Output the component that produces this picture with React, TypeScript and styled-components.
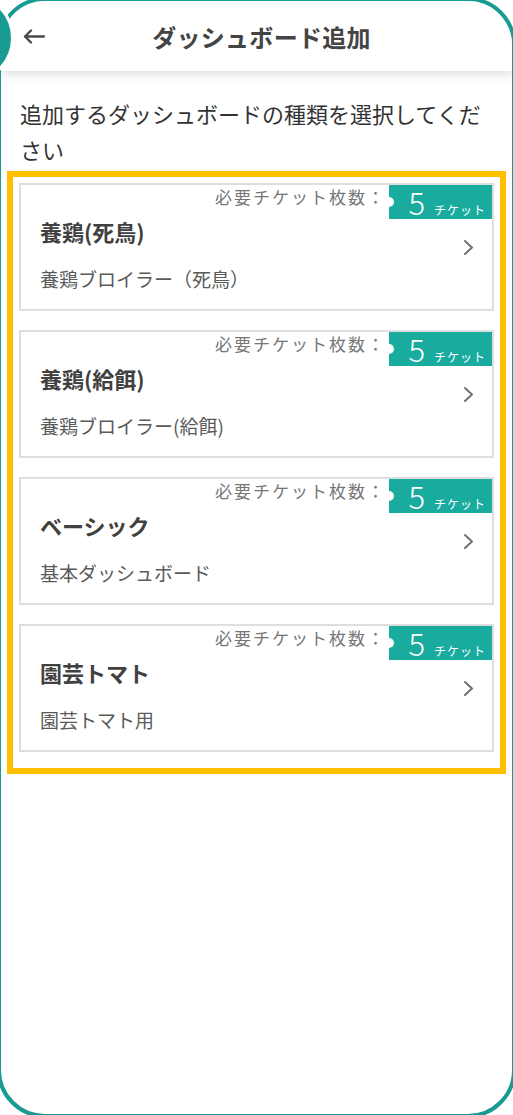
import React from "react";
import styled, { createGlobalStyle } from "styled-components";

const GlobalStyle = createGlobalStyle`
  html, body {
    margin: 0;
    padding: 0;
    width: 513px;
    height: 1115px;
    overflow: hidden;
    background: #ffffff;
    font-family: "Noto Sans CJK JP", "Noto Sans", sans-serif;
  }
  * { box-sizing: border-box; }
`;

const Root = styled.div`
  position: relative;
  width: 513px;
  height: 1115px;
  overflow: hidden;
`;

const Frame = styled.div`
  margin: -3px;
  width: 519px;
  height: 1121px;
  border: 4px solid #189b93;
  border-radius: 48px;
  background: #ffffff;
  display: flex;
  flex-direction: column;
  overflow: hidden;
`;

const CameraDot = styled.div`
  position: absolute;
  left: -76px;
  top: -7px;
  width: 90px;
  height: 90px;
  border-radius: 50%;
  background: #189b93;
  border: 3px solid #ffffff;
  z-index: 5;
`;

const Header = styled.header`
  height: 70px;
  flex: none;
  display: flex;
  align-items: center;
  background: #ffffff;
  box-shadow: 0 3px 10px rgba(0, 0, 0, 0.14);
  position: relative;
  z-index: 1;
`;

const BackButton = styled.button`
  border: none;
  background: none;
  padding: 0 0 0 22px;
  width: 44px;
  height: 100%;
  display: flex;
  align-items: center;
  cursor: pointer;
`;

const HeaderTitle = styled.h1`
  flex: 1;
  margin: 0;
  text-align: center;
  font-size: 24px;
  font-weight: 700;
  color: #444444;
  letter-spacing: 0.3px;
`;

const HeaderSpacer = styled.div`
  width: 34px;
`;

const Lead = styled.p`
  margin: 24px 0 0;
  padding: 0 20px 0 19px;
  font-size: 22px;
  line-height: 36px;
  color: #333333;
`;

const Highlight = styled.div`
  margin: 4px 6px 0;
  border: 6px solid #ffc000;
  padding: 6px 6px 16px;
  display: flex;
  flex-direction: column;
  gap: 19px;
`;

const Card = styled.div`
  border: 2px solid #dedede;
  background: #ffffff;
  display: grid;
  grid-template-columns: 1fr auto;
  grid-template-rows: 34px 24px auto;
  padding-bottom: 18px;
  cursor: pointer;
`;

const TicketRow = styled.div`
  grid-column: 1 / -1;
  grid-row: 1;
  display: flex;
  justify-content: flex-end;
  align-items: flex-start;
`;

const TicketLabel = styled.span`
  margin-top: 2px;
  margin-right: 3px;
  font-size: 17px;
  line-height: 20px;
  letter-spacing: 2px;
  color: #767676;
`;

const Badge = styled.div`
  position: relative;
  width: 103px;
  height: 34px;
  background: #1aab9f;
  color: #ffffff;
  display: flex;
  align-items: baseline;
  justify-content: flex-end;
  padding: 0 6px 0 0;
  gap: 9px;

  &::before {
    content: "";
    position: absolute;
    left: -5px;
    top: 12px;
    width: 10px;
    height: 10px;
    border-radius: 50%;
    background: #ffffff;
  }
`;

const BadgeNumber = styled.span`
  font-size: 31px;
  line-height: 34px;
  font-weight: 300;
`;

const BadgeUnit = styled.span`
  font-size: 12px;
  letter-spacing: 1px;
`;

const CardTitle = styled.div`
  grid-column: 1;
  grid-row: 2;
  padding-left: 19px;
  font-size: 22px;
  line-height: 24px;
  font-weight: 700;
  color: #404040;
`;

const CardSub = styled.div`
  grid-column: 1;
  grid-row: 3;
  margin-top: 24px;
  padding-left: 19px;
  font-size: 19px;
  line-height: 24px;
  color: #5a5a5a;
`;

const Chevron = styled.svg`
  grid-column: 2;
  grid-row: 1 / 4;
  align-self: center;
  margin: 18px 18px 0 0;
`;

type Item = { title: string; sub: string };

const items: Item[] = [
  { title: "養鶏(死鳥)", sub: "養鶏ブロイラー（死鳥）" },
  { title: "養鶏(給餌)", sub: "養鶏ブロイラー(給餌)" },
  { title: "ベーシック", sub: "基本ダッシュボード" },
  { title: "園芸トマト", sub: "園芸トマト用" },
];

const DashboardCard: React.FC<Item> = ({ title, sub }) => (
  <Card>
    <TicketRow>
      <TicketLabel>必要チケット枚数：</TicketLabel>
      <Badge>
        <BadgeNumber>5</BadgeNumber>
        <BadgeUnit>チケット</BadgeUnit>
      </Badge>
    </TicketRow>
    <CardTitle>{title}</CardTitle>
    <CardSub>{sub}</CardSub>
    <Chevron width="11" height="17" viewBox="0 0 11 17" fill="none">
      <path d="M2 2 L9 8.5 L2 15" stroke="#707070" strokeWidth="2" strokeLinecap="round" strokeLinejoin="round" />
    </Chevron>
  </Card>
);

export default function App() {
  return (
    <Root>
      <GlobalStyle />
      <Frame>
        <Header>
          <BackButton aria-label="戻る">
            <svg width="22" height="15" viewBox="0 0 22 15" fill="none">
              <path d="M21 7.5 H2 M8 1.5 L2 7.5 L8 13.5" stroke="#4a4a4a" strokeWidth="2.4" strokeLinecap="round" strokeLinejoin="round" />
            </svg>
          </BackButton>
          <HeaderTitle>ダッシュボード追加</HeaderTitle>
          <HeaderSpacer />
        </Header>
        <Lead>追加するダッシュボードの種類を選択してください</Lead>
        <Highlight>
          {items.map((it) => (
            <DashboardCard key={it.title} {...it} />
          ))}
        </Highlight>
      </Frame>
      <CameraDot />
    </Root>
  );
}
